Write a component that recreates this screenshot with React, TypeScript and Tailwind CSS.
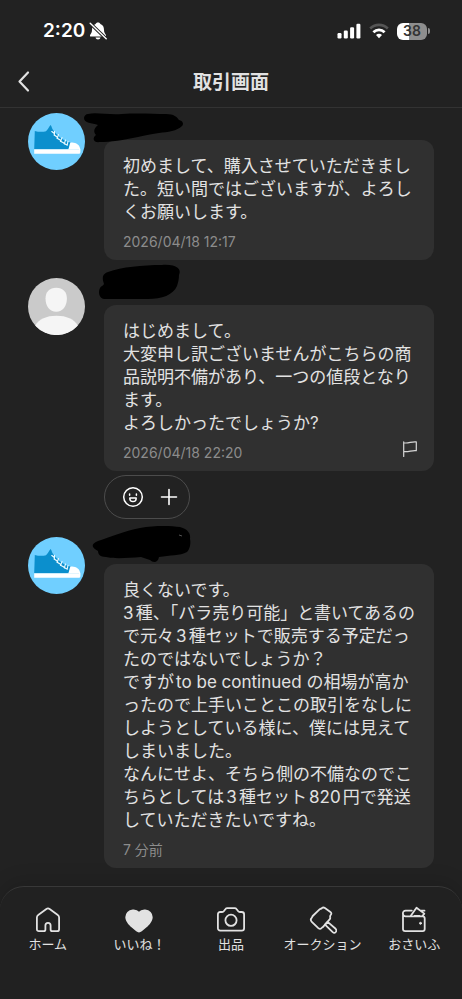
import type { ReactNode } from 'react';

type Message = {
  id: number;
  user: 'sneaker' | 'guest';
  text: string;
  time: string;
  report?: boolean;
  scribble: ReactNode;
};

const messages: Message[] = [
  {
    id: 1,
    user: 'sneaker',
    text: '初めまして、購入させていただきまし\nた。短い間ではございますが、よろし\nくお願いします。',
    time: '2026/04/18 12:17',
    scribble: (
      <path d="M4 1C12 -1 24 2 38 1C54 0 70 1 82 1C90 1 93 4 95 7C99 8 100 11 98 13C93 18 84 19 75 20C66 21 60 23 54 24C40 27 26 29 16 29C9 30 8 25 12 22C9 19 10 15 14 12C8 10 0 10 0 5C0 3 2 1 4 1Z" />
    ),
  },
  {
    id: 2,
    user: 'guest',
    text: 'はじめまして。\n大変申し訳ございませんがこちらの商\n品説明不備があり、一つの値段となり\nます。\nよろしかったでしょうか?',
    time: '2026/04/18 22:20',
    report: true,
    scribble: (
      <path d="M24 -6C38 -11 58 -13 78 -13C92 -14 98 -9 95 -3C95 1 94 5 93 8C89 17 78 21 64 21H20C15 20 14 14 16 10C17 8 19 8 20 6C18 0 18 -4 24 -6Z" />
    ),
  },
  {
    id: 3,
    user: 'sneaker',
    text: '良くないです。\n3種、「バラ売り可能」と書いてあるの\nで元々3種セットで販売する予定だっ\nたのではないでしょうか？\nですがto be continued の相場が高か\nったので上手いことこの取引をなしに\nしようとしている様に、僕には見えて\nしまいました。\nなんにせよ、そちら側の不備なのでこ\nちらとしては3種セット820円で発送\nしていただきたいですね。',
    time: '7 分前',
    scribble: (
      <>
        <path d="M14 4C26 0 40 -6 56 -9C72 -12 88 -11 96 -10C104 -8 107 -3 106 2C107 6 106 12 103 15C96 19 86 18 75 20C74 26 69 26 66 23L57 20C44 21 30 22 22 20C16 20 14 17 14 14C8 11 6 7 14 4Z" />
        <path d="M95 -2L98 -1" stroke="#555" strokeWidth="1" />
      </>
    ),
  },
];

function SneakerAvatar() {
  return (
    <svg className="h-[57px] w-[57px] shrink-0" viewBox="0 0 57 57" fill="none">
      <circle cx="28.5" cy="28.5" r="28.5" fill="#70cfff" />
      <path d="M6.8 18C10.500 19 15 19.200 18 18.200C20 16.800 20.800 13.500 22.600 12C23.700 13 23.800 15.500 25.400 17.500C29 22 35 28 42.500 29.500L41 36.500H6.200Z" fill="#0b8fcd" />
      <path d="M42.500 29.600C47 29.700 50.500 30.800 51.600 34L52.400 36.200V39C52.400 40.300 51.500 40.800 50.500 40.800H6.200V36.200H40.300C41.500 34 41.300 31.500 42.500 29.600Z" fill="#fff" />
      <path d="M6.200 36.500H51" stroke="#c7eafb" strokeWidth=".5" />
      <path d="M23.800 18.600L26.500 20.600M26.300 22L29.500 24.200M29.200 25.200L32.600 27.300M32.500 28.200L35.900 30M36.200 30.600L39.200 32" stroke="#eafaff" strokeWidth="1.300" strokeLinecap="round" />
      <path d="M26.500 18.200L26.300 22M30.500 21.600L29.200 25.200M34 24.600L32.600 28.200M37.500 27L36.400 30.600M40 28.400L39.200 32" stroke="#eafaff" strokeWidth="1.100" strokeLinecap="round" />
    </svg>
  );
}

function GuestAvatar() {
  return (
    <svg className="h-[57px] w-[57px] shrink-0" viewBox="0 0 57 57" fill="none">
      <circle cx="28.5" cy="28.5" r="28.5" fill="#cacaca" />
      <path d="M28.200 9.700C35 9.700 38.900 13.800 38.900 20.500C38.900 28 34.800 33.700 28.200 33.700C21.600 33.700 17.500 28 17.500 20.500C17.500 13.800 21.400 9.700 28.200 9.700Z" fill="#f5f5f5" />
      <path d="M7.200 47.500C11 41 18.500 37.700 28.500 37.700C38.500 37.700 46 41 49.800 47.500A28.500 28.500 0 0 1 7.200 47.500Z" fill="#f5f5f5" />
    </svg>
  );
}

function FlagIcon() {
  return (
    <svg className="h-4 w-4" viewBox="0 0 16 16" fill="none" stroke="#d6d6d6" strokeWidth="1.200" strokeLinejoin="round" strokeLinecap="round">
      <path d="M1.700 .8V15.500M1.700 1.700C6 3 9.500 .2 14.300 .9V9.700C10 9 6.500 11.300 1.700 10.500" />
    </svg>
  );
}

function Reactions() {
  return (
    <div className="mt-1 flex h-11 w-[86px] items-center justify-center gap-3 rounded-full border border-[#4c4c4c] pl-2">
      <button type="button" aria-label="リアクション">
        <svg className="h-6 w-6" viewBox="0 0 24 24" fill="none" stroke="#fff" strokeWidth="1.500">
          <circle cx="12" cy="12" r="9.300" />
          <path d="M8.600 9V10.300M15.400 9V10.300" strokeLinecap="round" />
          <path d="M8.800 13H15.200C15.200 15.400 14 16.600 12 16.600S8.800 15.400 8.800 13Z" strokeLinejoin="round" />
        </svg>
      </button>
      <button type="button" aria-label="追加">
        <svg className="h-6 w-6" viewBox="0 0 24 24" fill="none" stroke="#fff" strokeWidth="1.600" strokeLinecap="round">
          <path d="M12 4.500V19.500M4.500 12H19.500" />
        </svg>
      </button>
    </div>
  );
}

function StatusBar() {
  return (
    <div className="flex h-14 items-center justify-between pt-1.5 pr-8 pl-[43px] text-white">
      <div className="flex items-center gap-1">
        <span className="text-[19px] leading-6 font-semibold">2:20</span>
        <svg className="h-[18px] w-[18px]" viewBox="0 0 18 18" fill="none">
          <path d="M9 .5C10.300 .5 11.100 1.100 11.400 2C14.100 3 15 5.300 15 8C15 11 16.200 11.600 16.900 13C17.300 14 16.900 14.600 16 14.600H2C1.100 14.600 .7 14 1.100 13C1.800 11.600 3 11 3 8C3 5.300 3.900 3 6.600 2C6.900 1.100 7.700 .5 9 .5Z" fill="#fff" />
          <path d="M6.500 15.600H11.500C11.200 16.900 10.300 17.500 9 17.500S6.800 16.900 6.500 15.600Z" fill="#fff" />
          <path d="M1 1.200L17.500 17" stroke="#222" strokeWidth="3.400" />
          <path d="M1.200 1.200L17.200 16.800" stroke="#fff" strokeWidth="1.400" strokeLinecap="round" />
        </svg>
      </div>
      <div className="flex items-center gap-2">
        <svg className="h-4 w-6" viewBox="0 0 24 16" fill="#fff">
          <rect x=".5" y="10" width="4" height="5.500" rx="1.200" />
          <rect x="6.800" y="7.500" width="4" height="8" rx="1.200" />
          <rect x="13.100" y="4.300" width="4" height="11.200" rx="1.200" />
          <rect x="19.400" y=".7" width="4" height="14.800" rx="1.200" />
        </svg>
        <svg className="h-4 w-5" viewBox="0 0 20 16" fill="none">
          <path d="M1.200 5.500C6.300 .6 13.700 .6 18.800 5.500" stroke="#555" strokeWidth="2.600" />
          <path d="M4.400 9.200C7.600 6.100 12.400 6.100 15.600 9.200" stroke="#fff" strokeWidth="2.800" />
          <path d="M7 12C8.800 10.400 11.200 10.400 13 12L10 15.200Z" fill="#fff" />
        </svg>
        <div className="flex items-center gap-px">
          <span className="flex h-[17px] w-[30px] items-center justify-center rounded-md bg-linear-to-r from-white from-40% to-[#8e8e8e] to-40% text-sm leading-4 font-semibold text-[#333]">
            38
          </span>
          <span className="h-1.5 w-0.5 rounded-r-full bg-[#8e8e8e]" />
        </div>
      </div>
    </div>
  );
}

const navItems = [
  {
    label: 'ホーム',
    icon: (
      <path d="M2.900 11.400C2.900 10.300 3.300 9.500 4.200 8.900L12.400 3C13.400 2.300 14.600 2.300 15.600 3L23.800 8.900C24.700 9.500 25.100 10.300 25.100 11.400V23.200C25.100 24.400 24.300 25.200 23.100 25.200H18.300C17.200 25.200 16.600 24.600 16.600 23.500V19.400A2.600 2.600 0 0 0 11.400 19.400V23.500C11.400 24.600 10.800 25.200 9.700 25.200H4.900C3.700 25.200 2.900 24.400 2.900 23.200Z" />
    ),
  },
  {
    label: 'いいね！',
    icon: (
      <path fill="currentColor" d="M14 6.800C15.800 4.900 18 4.300 20.200 4.500C24.200 4.800 26.800 7.700 26.800 11.300C26.800 14.500 25 16.800 22.500 19.200L16.200 24.600C14.800 25.700 13.200 25.700 11.800 24.600L5.500 19.200C3 16.800 1.200 14.500 1.200 11.300C1.200 7.700 3.800 4.800 7.800 4.500C10 4.300 12.200 4.900 14 6.800Z" />
    ),
  },
  {
    label: '出品',
    icon: (
      <>
        <path d="M3.300 6H5.200C6 6 6.500 5.700 7 5L8.500 3C9 2.300 9.600 2.100 10.300 2.100H17.700C18.400 2.100 19 2.300 19.500 3L21 5C21.500 5.700 22 6 22.800 6H24.700C26.200 6 27.100 6.900 27.100 8.400V22.200C27.100 23.700 26.200 24.600 24.700 24.600H3.300C1.800 24.600 .9 23.700 .9 22.200V8.400C.9 6.900 1.800 6 3.300 6Z" />
        <circle cx="14" cy="14.300" r="5.600" />
      </>
    ),
  },
  {
    label: 'オークション',
    icon: (
      <>
        <path d="M12.800 2.200C13.700 1.400 14.900 1.300 15.900 2L21.400 5.900C22.500 6.800 22.700 7.900 21.700 9C21.100 9.700 21 10.300 21.200 11.200C21.400 12 21.200 12.700 20.600 13.400L14.300 20.600C13.800 21.200 13.200 21.300 12.600 22C11.600 23.100 10.400 23 9.300 22.100L2.800 15.800C1.700 14.700 1.500 13.500 2.300 12.400C2.800 11.800 3.100 11.500 3.300 10.800C3.500 10.200 3.800 9.900 4.200 9.500L10.300 3.600C10.900 3 12 2.900 12.800 2.200Z" />
        <path d="M16 18.700L18.600 15.900L26.600 22.800C27.500 23.700 27.600 25 26.800 26C25.900 27 24.600 27 23.700 26.200Z" />
      </>
    ),
  },
  {
    label: 'おさいふ',
    icon: (
      <>
        <path d="M11.800 4.600H5.700C1.800 4.600 2.100 10.300 5.700 10.300H22.600C24 10.300 24.700 11 24.700 12.400V23.100C24.700 24.500 23.900 25.200 22.600 25.200H5.200C3.800 25.200 3 24.400 3 23.100V7.500" />
        <path d="M10.800 9.800L16.500 1.800L24.300 7.600L22.500 10M20.300 4.700H24.500M14.700 10L19.500 9.800" />
        <circle cx="20.500" cy="17.300" r="1" fill="currentColor" strokeWidth="1" />
      </>
    ),
  },
];

export default function App() {
  return (
    <div className="flex min-h-screen flex-col bg-[#222] font-[Inter,'Noto_Sans_CJK_JP',sans-serif] text-[#e2e2e2]" lang="ja">
      <StatusBar />

      <header className="grid h-[52px] grid-cols-3 items-center border-b border-[#333] px-3">
        <button type="button" aria-label="戻る" className="w-6">
          <svg className="h-6 w-6" viewBox="0 0 24 24" fill="none" stroke="currentColor" strokeWidth="2.200" strokeLinecap="round" strokeLinejoin="round">
            <path d="M16 2.500L7.500 11.500L16 20.500" />
          </svg>
        </button>
        <h1 className="pt-0.5 text-center text-[19px] leading-6 font-bold whitespace-nowrap">取引画面</h1>
      </header>

      <main className="flex flex-1 flex-col gap-[18px] pt-[5px] pr-7 pb-[18px] pl-7">
        {messages.map((message) => (
          <article key={message.id} className="flex items-start gap-[19px]">
            {message.user === 'sneaker' ? <SneakerAvatar /> : <GuestAvatar />}
            <div className="relative min-w-0 flex-1 pt-[27px]">
              <div className="flex flex-col gap-2 rounded-xl bg-[#303030] pt-[15px] pr-3 pb-2 pl-[19px]">
                <p className="text-[17px] leading-[23px] whitespace-pre [text-autospace:normal]">{message.text}</p>
                <div className="flex items-center justify-between">
                  <time className="text-sm leading-5 text-[#8c8c8c]">{message.time}</time>
                  {message.report && (
                    <button type="button" aria-label="通報" className="-mt-2 mr-1">
                      <FlagIcon />
                    </button>
                  )}
                </div>
              </div>
              {message.report && <Reactions />}
              <svg className="absolute top-0 -left-5 h-8 w-28 overflow-visible" viewBox="0 0 112 32" fill="#000">
                {message.scribble}
              </svg>
            </div>
          </article>
        ))}
      </main>

      <nav className="flex h-[113px] rounded-t-3xl border-t border-[#383838] bg-[#212121] px-0.5 pt-[19px] shadow-[0_-4px_20px_rgba(0,0,0,0.15)]">
        {navItems.map((item) => (
          <a key={item.label} href="#" className="flex flex-1 basis-0 flex-col items-center">
            <svg className="h-7 w-7" viewBox="0 0 28 28" fill="none" stroke="currentColor" strokeWidth="1.800" strokeLinecap="round" strokeLinejoin="round">
              {item.icon}
            </svg>
            <span className="text-[13px] leading-5 whitespace-nowrap">{item.label}</span>
          </a>
        ))}
      </nav>
    </div>
  );
}
